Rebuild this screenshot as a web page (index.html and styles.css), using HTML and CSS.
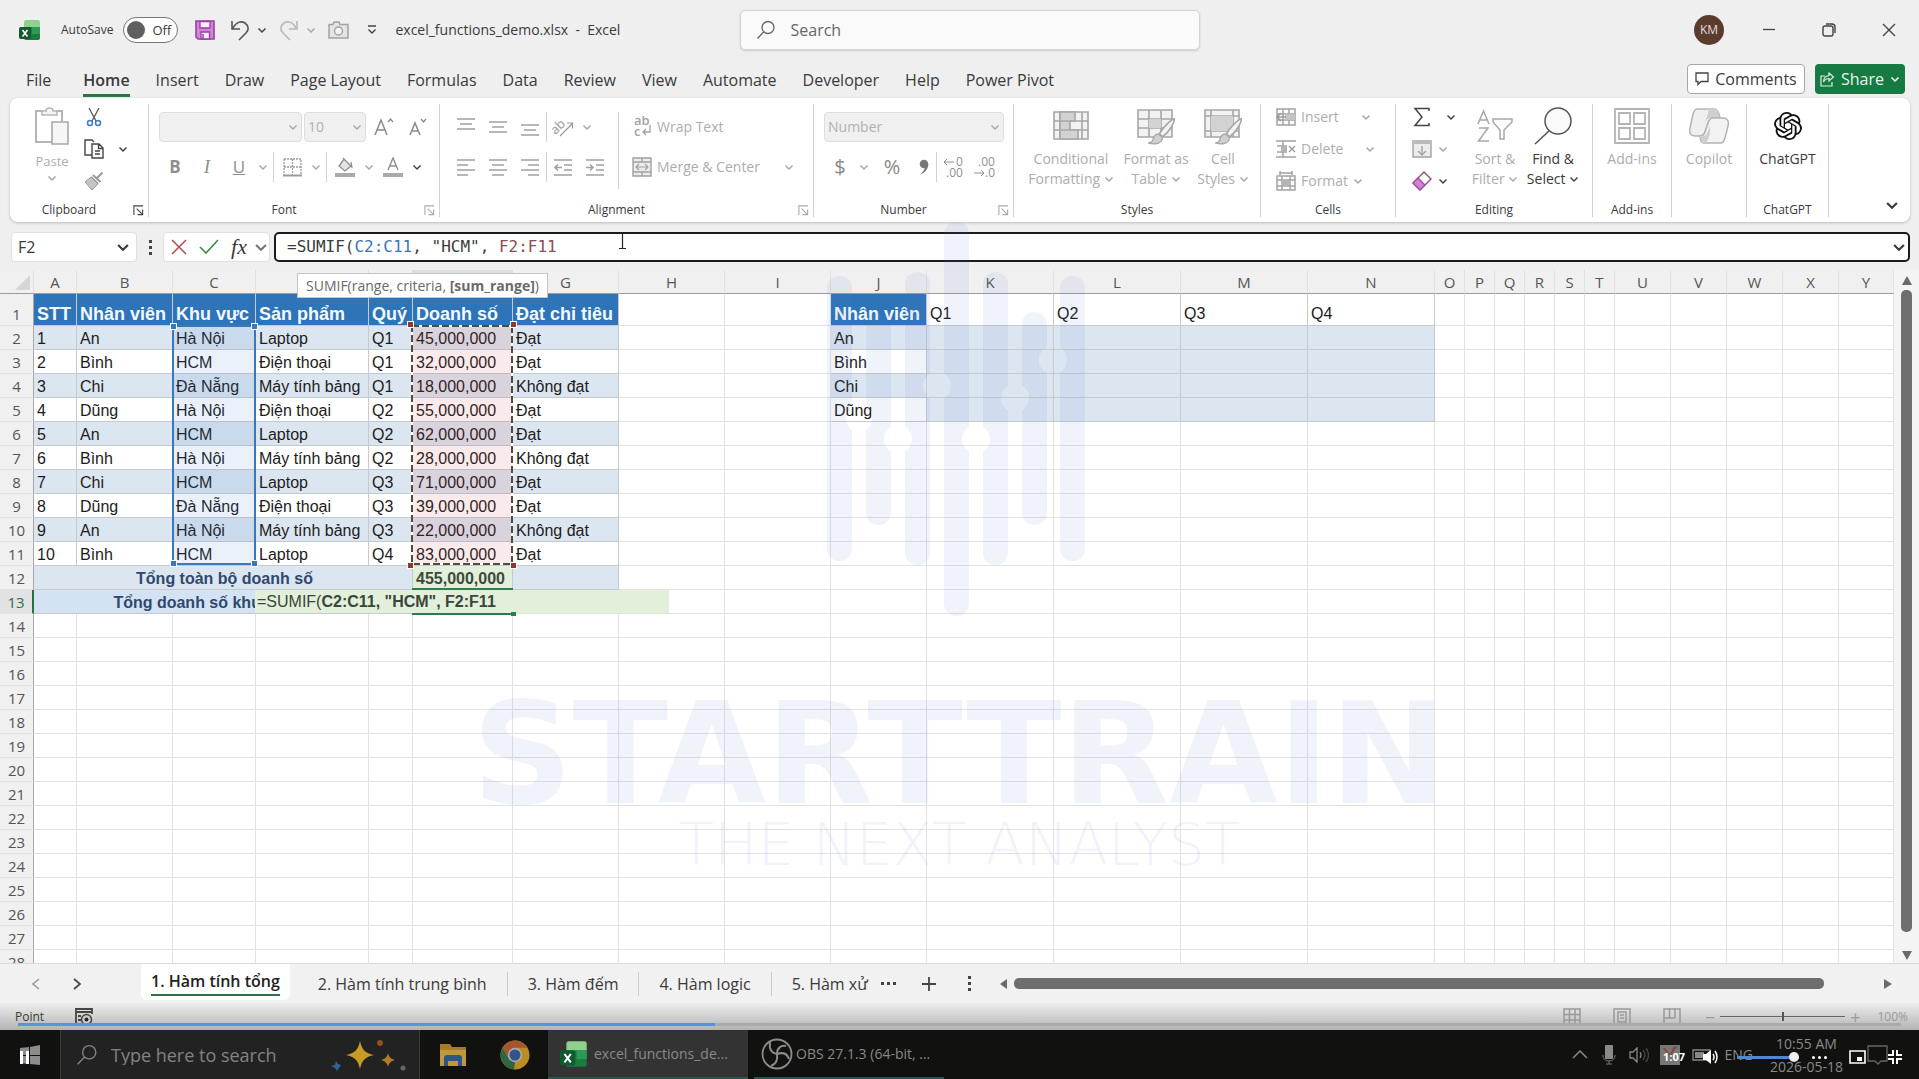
FILE: index.html
```html
<!DOCTYPE html>
<html lang="en">
<head>
<meta charset="utf-8">
<title>excel_functions_demo.xlsx - Excel</title>
<link rel="stylesheet" href="styles.css">
</head>
<body>
<svg class="defs" aria-hidden="true">
  <symbol id="chev" viewBox="0 0 10 10"><path d="M1.500 3.500 5 7l3.500-3.500" fill="none" stroke="currentColor" stroke-width="1.500"/></symbol>
  <symbol id="launch" viewBox="0 0 12 12"><path d="M1 11V1h10M4 4l6 6M10.500 5v5.500H5" fill="none" stroke="currentColor" stroke-width="1.200"/></symbol>
  <symbol id="lens" viewBox="0 0 20 20"><path d="M12 1.500a6 6 0 1 1 0 12 6 6 0 0 1 0-12zM7.800 11.800 1.500 18.500" fill="none" stroke="currentColor" stroke-width="1.300"/></symbol>
  <symbol id="xl" viewBox="0 0 22 22"><path d="M7 1h12a2 2 0 0 1 2 2v6H5V3a2 2 0 0 1 2-2z" fill="#8fd08f"/><path d="M5 8h16v11a2 2 0 0 1-2 2H7a2 2 0 0 1-2-2z" fill="#1d7a41"/><path d="M13 8h8v7h-8z" fill="#2c9a55"/><rect x="0" y="8" width="12" height="12" rx="2" fill="#12592f"/><path d="m3.500 11 5 6.500M8.500 11l-5 6.500" stroke="#fff" stroke-width="1.600"/></symbol>
  <symbol id="brush" viewBox="0 0 28 26"><path d="M26.500 1.500c-4 1-11 9-14 14l3 3c5-4 11-12 11-17z" fill="#f4f4f4" stroke="#a6a6a6" stroke-width="1.500"/><path d="M12 16c-3 0-5 2-5.500 5-.5 2-2 3-4.500 3 6 2 13 1 13.500-5z" fill="#d0d0d0" stroke="#a6a6a6" stroke-width="1.200"/></symbol>
</svg>

<header class="titlebar">
  <svg class="app-icon"><use href="#xl"/></svg>
  <label class="autosave">AutoSave <input type="checkbox" class="sr" disabled><span class="toggle"><i></i>Off</span></label>
  <button class="tb save" aria-label="Save"><svg width="20" height="20" viewBox="0 0 20 20"><path d="M1 1h18v18H3l-2-2z" fill="#cf86d6" stroke="#9b3fa6" stroke-width="1.600"/><path d="M5 1.500h10V8H5zM6 12h8.500v7H6z" fill="#f7eef8" stroke="#9b3fa6" stroke-width="1.300"/><path d="M8 14v5" stroke="#9b3fa6" stroke-width="1.500"/></svg></button>
  <button class="tb undo" aria-label="Undo"><svg width="20" height="22" viewBox="0 0 20 22"><path d="M2 2v8h8M2.500 9.500C6 3 11 1.500 15 4c4 3 4 7 1 10l-7 7" fill="none" stroke="#555" stroke-width="1.600"/></svg><svg class="chev"><use href="#chev"/></svg></button>
  <button class="tb redo" aria-label="Redo" disabled><svg width="20" height="22" viewBox="0 0 20 22"><path d="M18 2v8h-8M17.500 9.500C14 3 9 1.500 5 4c-4 3-4 7-1 10l7 7" fill="none" stroke="#b8b8b8" stroke-width="1.600"/></svg><svg class="chev"><use href="#chev"/></svg></button>
  <button class="tb camera" aria-label="Camera" disabled><svg width="21" height="18" viewBox="0 0 21 18"><path d="M1 3.500h4L6 1h5l1 2.500h8V17H1z" fill="#e4e4e4" stroke="#a3a3a3" stroke-width="1.500"/><circle cx="10.500" cy="10" r="4" fill="#f3f3f3" stroke="#a3a3a3" stroke-width="1.500"/></svg></button>
  <button class="tb more" aria-label="Customize Quick Access Toolbar"><svg width="10" height="10" viewBox="0 0 10 10"><path d="M1 1h8M1.500 4.500 5 8l3.500-3.500" fill="none" stroke="#444" stroke-width="1.400"/></svg></button>
  <h1>excel_functions_demo.xlsx&nbsp; -&nbsp; Excel</h1>
  <label class="search"><svg width="20" height="20"><use href="#lens"/></svg><input type="text" placeholder="Search" aria-label="Search"></label>
  <div class="window">
    <button class="avatar">KM</button>
    <button aria-label="Minimize"><svg width="14" height="14"><path d="M1 6.500h12" stroke="#444" stroke-width="1.300"/></svg></button>
    <button aria-label="Restore"><svg width="14" height="14"><path d="M1 5a2 2 0 0 1 2-2h6a2 2 0 0 1 2 2v6a2 2 0 0 1-2 2H3a2 2 0 0 1-2-2zM4 1h6a3 3 0 0 1 3 3v6" fill="none" stroke="#444" stroke-width="1.400"/></svg></button>
    <button aria-label="Close"><svg width="14" height="14"><path d="m1 1 12 12M13 1 1 13" stroke="#444" stroke-width="1.400"/></svg></button>
  </div>
</header>

<nav class="tabs">
  <a href="#">File</a><a href="#" class="on">Home</a><a href="#">Insert</a><a href="#">Draw</a><a href="#">Page Layout</a><a href="#">Formulas</a><a href="#">Data</a><a href="#">Review</a><a href="#">View</a><a href="#">Automate</a><a href="#">Developer</a><a href="#">Help</a><a href="#">Power Pivot</a>
  <button class="comments"><svg width="14" height="14"><path d="M1 1h12v8.500H6L3 12.500v-3H1z" fill="none" stroke="#444" stroke-width="1.300"/></svg>Comments</button>
  <button class="share"><svg width="15" height="15" viewBox="0 0 15 15"><path d="M5 4H1v10h11v-4M9 1l4.500 4L9 9V6.500C6 6.500 4.500 8 3.500 10 3.500 6.500 5.500 4 9 3.500z" fill="none" stroke="#d9efe0" stroke-width="1.200"/></svg>Share<svg class="chev"><use href="#chev"/></svg></button>
</nav>

<section class="ribbon" aria-label="Home ribbon">
  <div class="group g-clip">
    <div class="body">
      <button class="big" disabled><svg width="34" height="38" viewBox="0 0 34 38"><path d="M7 4H1v31h16M21 4h6v10" fill="none" stroke="#b5b5b5" stroke-width="2"/><path d="M7 8V4h4c0-4 7-4 7 0h4v4z" fill="#f4f4f4" stroke="#b5b5b5" stroke-width="1.500"/><path d="M17 15h16v22H17z" fill="#f6f6f6" stroke="#a8a8a8" stroke-width="1.600"/></svg><span>Paste</span><svg class="chev"><use href="#chev"/></svg></button>
      <div class="stack">
        <button aria-label="Cut"><svg width="20" height="20" viewBox="0 0 20 20"><path d="m5 1 7 13M15 1 8 14" stroke="#555" stroke-width="1.300"/><circle cx="6" cy="16" r="2.500" fill="none" stroke="#3b7cc0" stroke-width="1.500"/><circle cx="14" cy="16" r="2.500" fill="none" stroke="#3b7cc0" stroke-width="1.500"/></svg></button>
        <button aria-label="Copy"><svg width="20" height="20" viewBox="0 0 20 20"><path d="M8 16H1V1h7l2 2M8 5h7l4 4v10H8zM14.500 5v4.500H19M11 12h5M11 15h5" fill="none" stroke="#444" stroke-width="1.400"/></svg><svg class="chev"><use href="#chev"/></svg></button>
        <button aria-label="Format Painter" disabled><svg width="20" height="20" viewBox="0 0 20 20"><path d="M18.500 1.500 13 7M7 6l7 7M9 4l7.500 7" fill="none" stroke="#999" stroke-width="2"/><path d="M7 6 1 11l7 8 6-6z" fill="#c4c4c4" stroke="#999"/></svg></button>
      </div>
    </div>
    <div class="foot"><span>Clipboard</span><button aria-label="Clipboard settings"><svg><use href="#launch"/></svg></button></div>
  </div>

  <div class="group g-font">
    <div class="body rows">
      <div class="row">
        <select class="dd w-font" aria-label="Font" disabled><option></option></select>
        <select class="dd w-size" aria-label="Font size" disabled><option>10</option></select>
        <button class="s32" aria-label="Increase font size" disabled><svg width="20" height="20" viewBox="0 0 20 20"><path d="M1 18 7 3l6 15M3 13h8" fill="none" stroke="#8a8a8a" stroke-width="1.500"/><path d="m14 5 2.500-3L19 5" fill="none" stroke="#8a8a8a" stroke-width="1.300"/></svg></button>
        <button class="s32" aria-label="Decrease font size" disabled><svg width="18" height="20" viewBox="0 0 18 20"><path d="m1 18 5-12 5 12M3 14h6" fill="none" stroke="#8a8a8a" stroke-width="1.500"/><path d="m12 2 2.500 3L17 2" fill="none" stroke="#8a8a8a" stroke-width="1.300"/></svg></button>
      </div>
      <div class="row">
        <button class="s32 ltr" disabled><b>B</b></button><button class="s32 ltr ital" disabled>I</button><button class="s32 ltr und" disabled>U</button><button class="s16" aria-label="Underline options" disabled><svg class="chev"><use href="#chev"/></svg></button>
        <i class="sep"></i>
        <button class="s32" aria-label="Borders" disabled><svg width="19" height="19" viewBox="0 0 19 19"><path d="M1 1h17v16M1 1v16M9.500 1v16M1 9h17" fill="none" stroke="#9a9a9a" stroke-width="1.300" stroke-dasharray="2 1"/><path d="M0 17.500h19" stroke="#9a9a9a" stroke-width="2"/></svg></button><button class="s16" aria-label="Border options" disabled><svg class="chev"><use href="#chev"/></svg></button>
        <i class="sep"></i>
        <button class="s32" aria-label="Fill color" disabled><svg width="20" height="20" viewBox="0 0 20 20"><path d="m9 2 7 7-6 5-6-5zM8 1l3 3M16 5l1 6" fill="#e4e4e4" stroke="#8f8f8f" stroke-width="1.300"/><path d="M0 16h20v4H0z" fill="#aaa"/></svg></button><button class="s16" aria-label="Fill options" disabled><svg class="chev"><use href="#chev"/></svg></button>
        <button class="s32 fc" aria-label="Font color" disabled><svg width="20" height="20" viewBox="0 0 20 20"><path d="m5 13 5-12 5 12M7 9h6" fill="none" stroke="#8f8f8f" stroke-width="1.400"/><path d="M0 16h20v4H0z" fill="#aaa"/></svg></button><button class="s16" aria-label="Font color options"><svg class="chev"><use href="#chev"/></svg></button>
      </div>
    </div>
    <div class="foot"><span>Font</span><button aria-label="Font settings" disabled><svg><use href="#launch"/></svg></button></div>
  </div>

  <div class="group g-align">
    <div class="body">
      <div class="rows al">
        <div class="row">
          <button class="s32" aria-label="Top align" disabled><svg class="ln"><path d="M0 1h18M3 6h12M0 11h18"/></svg></button><button class="s32" aria-label="Middle align" disabled><svg class="ln"><path d="M0 4h18M3 9h12M0 14h18"/></svg></button><button class="s32" aria-label="Bottom align" disabled><svg class="ln"><path d="M0 7h18M3 12h12M0 17h18"/></svg></button><i class="sep"></i>
          <button class="s32" aria-label="Orientation" disabled><svg width="22" height="20" viewBox="0 0 22 20"><text x="0" y="14" transform="rotate(-45 7 12)" font-size="13" fill="#999">ab</text><path d="M8 19 20 7M15 6h5.500v5.500" fill="none" stroke="#999" stroke-width="1.200"/></svg></button><button class="s16" aria-label="Orientation options" disabled><svg class="chev"><use href="#chev"/></svg></button>
        </div>
        <div class="row">
          <button class="s32" aria-label="Align left" disabled><svg class="ln"><path d="M0 2h18M0 7h11M0 12h18M0 17h11"/></svg></button><button class="s32" aria-label="Center" disabled><svg class="ln"><path d="M0 2h18M3 7h12M0 12h18M3 17h12"/></svg></button><button class="s32" aria-label="Align right" disabled><svg class="ln"><path d="M0 2h18M7 7h11M0 12h18M7 17h11"/></svg></button><i class="sep"></i>
          <button class="s32" aria-label="Decrease indent" disabled><svg class="ln"><path d="M0 2h18M10 7h8M10 12h8M0 17h18M8 9.500H1M4 6.500l-3 3 3 3"/></svg></button><button class="s32" aria-label="Increase indent" disabled><svg class="ln"><path d="M0 2h18M10 7h8M10 12h8M0 17h18M0 9.500h7M4 6.500l3 3-3 3"/></svg></button>
        </div>
      </div>
      <div class="rows wrapcol">
        <button class="txt" disabled><svg width="20" height="22" viewBox="0 0 20 22"><text x="2" y="9" font-size="13" font-weight="600" fill="#a0a0a0">ab</text><text x="2" y="20" font-size="13" font-weight="600" fill="#a0a0a0">c</text><path d="M18 9v7h-7M14 13l-3 3 3 3" fill="none" stroke="#a0a0a0" stroke-width="1.300"/></svg>Wrap Text</button>
        <button class="txt" disabled><svg width="20" height="20" viewBox="0 0 20 20"><path d="M1 1h18v18H1zM1 5h18M1 15h18M10 1v4M10 15v4" fill="#ececec" stroke="#a0a0a0" stroke-width="1.400"/><path d="M4 10h12M7 7l-3 3 3 3M13 7l3 3-3 3" fill="none" stroke="#a0a0a0" stroke-width="1.200"/></svg>Merge &amp; Center<svg class="chev far"><use href="#chev"/></svg></button>
      </div>
    </div>
    <div class="foot"><span>Alignment</span><button aria-label="Alignment settings" disabled><svg><use href="#launch"/></svg></button></div>
  </div>

  <div class="group g-num">
    <div class="body rows">
      <div class="row"><select class="dd w-num" aria-label="Number format" disabled><option>Number</option></select></div>
      <div class="row">
        <button class="s32 sym" disabled>$</button><button class="s16" aria-label="Currency options" disabled><svg class="chev"><use href="#chev"/></svg></button><button class="s40 sym" disabled>%</button><button class="s24" aria-label="Comma style" disabled><svg width="10" height="16" viewBox="0 0 10 16"><circle cx="5" cy="5" r="4.300" fill="#777"/><path d="M9.300 5C9.300 10 6 14 1 15.500 4.500 12.500 6 10 6 7z" fill="#777"/></svg></button><i class="sep"></i>
        <button class="s32 dec" aria-label="Increase decimal" disabled><svg width="22" height="22" viewBox="0 0 22 22"><text x="14" y="10" font-size="12">0</text><text x="4" y="21" font-size="12">.00</text><path d="M12 6H2M5 3 2 6l3 3"/></svg></button><button class="s32 dec" aria-label="Decrease decimal" disabled><svg width="22" height="22" viewBox="0 0 22 22"><text x="4" y="10" font-size="12">.00</text><text x="11" y="21" font-size="12">.0</text><path d="M0 17h10M7 14l3 3-3 3"/></svg></button>
      </div>
    </div>
    <div class="foot"><span>Number</span><button aria-label="Number settings" disabled><svg><use href="#launch"/></svg></button></div>
  </div>

  <div class="group g-styles">
    <div class="body">
      <button class="big" disabled><svg width="36" height="30" viewBox="0 0 36 30"><path d="M1 1h34v27H1zM1 10h34M1 19h34M7 1v27M29 1v27" fill="#f2f2f2" stroke="#a6a6a6" stroke-width="1.600"/><path d="M7 1h15v9H7zM7 10h10v9H7zM7 19h18v9H7z" fill="#d2d2d2" stroke="#a6a6a6" stroke-width="1.600"/></svg><span>Conditional<br>Formatting <svg class="chev"><use href="#chev"/></svg></span></button>
      <button class="big" disabled><svg width="38" height="34" viewBox="0 0 38 34"><path d="M1 1h34v27H1zM1 10h34M1 19h34M12 1v27M24 1v27" fill="#f2f2f2" stroke="#a6a6a6" stroke-width="1.600"/><path d="M12 10h12v9H12z" fill="#d2d2d2"/><use href="#brush" x="9" y="8" width="30" height="28"/></svg><span>Format as<br>Table <svg class="chev"><use href="#chev"/></svg></span></button>
      <button class="big" disabled><svg width="38" height="34" viewBox="0 0 38 34"><path d="M1 1h34v27H1zM1 7h34M7 1v27M1 22h34M29 1v27" fill="#f2f2f2" stroke="#a6a6a6" stroke-width="1.600"/><path d="M7 7h22v15H7z" fill="#d2d2d2"/><use href="#brush" x="9" y="8" width="30" height="28"/></svg><span>Cell<br>Styles <svg class="chev"><use href="#chev"/></svg></span></button>
    </div>
    <div class="foot"><span>Styles</span></div>
  </div>

  <div class="group g-cells">
    <div class="body"><div class="stack">
      <button disabled><svg width="20" height="18" viewBox="0 0 20 18"><path d="M1 1h18v16H1zM7 1v16M13 1v16M1 6h18M1 12h18" fill="none" stroke="#a3a3a3" stroke-width="1.500"/><path d="M9 6h10v6H9z" fill="#c4c4c4"/><path d="M10 9H1M5 5 1 9l4 4" fill="none" stroke="#999" stroke-width="1.500"/></svg>Insert<svg class="chev c1"><use href="#chev"/></svg></button>
      <button disabled><svg width="20" height="18" viewBox="0 0 20 18"><path d="M0 1h20M0 17h20M7 1v16M1 6h10M1 12h10" fill="none" stroke="#a3a3a3" stroke-width="1.500"/><path d="M5 6h6v6H5z" fill="#b4b4b4"/><path d="m13 6 6 6M19 6l-6 6" stroke="#999" stroke-width="1.300"/></svg>Delete<svg class="chev c1"><use href="#chev"/></svg></button>
      <button disabled><svg width="20" height="20" viewBox="0 0 20 20"><path d="M1 5h18v14H1zM6 5v14M14 5v14M1 9h18M1 15h18M4 2h12M4 0v4M16 0v4" fill="none" stroke="#a3a3a3" stroke-width="1.500"/><path d="M6 9h8v6H6z" fill="#b4b4b4"/></svg>Format<svg class="chev"><use href="#chev"/></svg></button>
    </div></div>
    <div class="foot"><span>Cells</span></div>
  </div>

  <div class="group g-edit">
    <div class="body">
      <div class="stack">
        <button aria-label="AutoSum"><svg width="20" height="20" viewBox="0 0 20 20"><path d="M17 4V1.500H3l7 8.500-7 8.500h14V16" fill="none" stroke="#444" stroke-width="1.500"/></svg><svg class="chev c2"><use href="#chev"/></svg></button>
        <button aria-label="Fill" disabled><svg width="20" height="18" viewBox="0 0 20 18"><path d="M1 1h18v16H1z" fill="#ececec" stroke="#a3a3a3" stroke-width="1.400"/><path d="M1 1h18v3H1z" fill="#bbb"/><path d="M10 6v9M6 11l4 4 4-4" fill="none" stroke="#a3a3a3" stroke-width="1.400"/></svg><svg class="chev"><use href="#chev"/></svg></button>
        <button aria-label="Clear"><svg width="20" height="20" viewBox="0 0 20 20"><path d="m12 1 7 7L8 19l-7-7z" fill="#fff" stroke="#8b4a86" stroke-width="1.400"/><path d="m6 7 7 7-5 5-7-7z" fill="#d084d6" stroke="#a04aa0" stroke-width="1.200"/></svg><svg class="chev"><use href="#chev"/></svg></button>
      </div>
      <button class="big" disabled><svg width="36" height="34" viewBox="0 0 36 34"><path d="m1 15 5.500-13L12 15M3 11h7M2 19h9L1.500 32H12M16 10h19v3l-8 8v9h-4v-9l-7-8z" fill="none" stroke="#a8a8a8" stroke-width="1.500"/></svg><span>Sort &amp;<br>Filter <svg class="chev"><use href="#chev"/></svg></span></button>
      <button class="big"><svg width="38" height="38" viewBox="0 0 38 38"><circle cx="24" cy="14" r="13" fill="#fafafa" stroke="#555" stroke-width="1.500"/><path d="M15 24 1 37" stroke="#555" stroke-width="1.600"/></svg><span>Find &amp;<br>Select <svg class="chev"><use href="#chev"/></svg></span></button>
    </div>
    <div class="foot"><span>Editing</span></div>
  </div>

  <div class="group g-add">
    <div class="body"><button class="big" disabled><svg width="36" height="36" viewBox="0 0 36 36"><path d="M1 1h34v34H1zM5 5h11v11H5zM20 5h11v11H20zM5 20h11v11H5zM20 20h11v11H20z" fill="none" stroke="#b4b4b4" stroke-width="1.800"/></svg><span>Add-ins</span></button></div>
    <div class="foot"><span>Add-ins</span></div>
  </div>
  <div class="group g-cop">
    <div class="body"><button class="big" disabled><svg width="40" height="36" viewBox="0 0 40 36"><path d="M8 1h17c3 0 4 2 5 5l1 4h-7c-3 0-4 2-5 5l-3 9c-1 3-2 4-5 4H6c-5 0-6-4-5-8L4 6c1-3 2-5 4-5z" fill="#efefef" stroke="#b4b4b4" stroke-width="1.500"/><path d="M20 1c-2 8-4 13-4 13s2-4 6-4h9c-1-5-2-9-5-9z" fill="#cfcfcf"/><path d="M32 35H15c-3 0-4-2-4-7 3 0 4-1 5-4l3-9c1-3 2-5 5-5h10c5 0 6 4 5 8l-3 12c-1 3-2 5-4 5z" fill="#f3f3f3" stroke="#b4b4b4" stroke-width="1.500"/><path d="M11 28h3c3 0 4-2 5-5l2-5c1 8-2 17-6 17-2 0-3-2-4-7z" fill="#cfcfcf"/></svg><span>Copilot</span></button></div>
    <div class="foot"></div>
  </div>
  <div class="group g-gpt">
    <div class="body"><button class="big"><svg width="28" height="28" viewBox="0 0 24 24"><path d="M22.2819 9.8211a5.9847 5.9847 0 0 0-.5157-4.9108 6.0462 6.0462 0 0 0-6.5098-2.9A6.0651 6.0651 0 0 0 4.9807 4.1818a5.9847 5.9847 0 0 0-3.9977 2.9 6.0462 6.0462 0 0 0 .7427 7.0966 5.98 5.98 0 0 0 .511 4.9107 6.051 6.051 0 0 0 6.5146 2.9001A5.9847 5.9847 0 0 0 13.2599 24a6.0557 6.0557 0 0 0 5.7718-4.2058 5.9894 5.9894 0 0 0 3.9977-2.9001 6.0557 6.0557 0 0 0-.7475-7.0729zm-9.022 12.6081a4.4755 4.4755 0 0 1-2.8764-1.0408l.1419-.0804 4.7783-2.7582a.7948.7948 0 0 0 .3927-.6813v-6.7369l2.02 1.1686a.071.071 0 0 1 .038.052v5.5826a4.504 4.504 0 0 1-4.4945 4.4944zm-9.6607-4.1254a4.4708 4.4708 0 0 1-.5346-3.0137l.142.0852 4.783 2.7582a.7712.7712 0 0 0 .7806 0l5.8428-3.3685v2.3324a.0804.0804 0 0 1-.0332.0615L9.74 19.9502a4.4992 4.4992 0 0 1-6.1408-1.6464zM2.3408 7.8956a4.485 4.485 0 0 1 2.3655-1.9728V11.6a.7664.7664 0 0 0 .3879.6765l5.8144 3.3543-2.0201 1.1685a.0757.0757 0 0 1-.071 0l-4.8303-2.7865A4.504 4.504 0 0 1 2.3408 7.872zm16.5963 3.8558L13.1038 8.364 15.1192 7.2a.0757.0757 0 0 1 .071 0l4.8303 2.7913a4.4944 4.4944 0 0 1-.6765 8.1042v-5.6772a.79.79 0 0 0-.407-.667zm2.0107-3.0231l-.142-.0852-4.7735-2.7818a.7759.7759 0 0 0-.7854 0L9.409 9.2297V6.8974a.0662.0662 0 0 1 .0284-.0615l4.8303-2.7866a4.4992 4.4992 0 0 1 6.6802 4.66zM8.3065 12.863l-2.02-1.1638a.0804.0804 0 0 1-.038-.0567V6.0742a4.4992 4.4992 0 0 1 7.3757-3.4537l-.142.0805L8.704 5.459a.7948.7948 0 0 0-.3927.6813zm1.0976-2.3654l2.602-1.4998 2.6069 1.4998v2.9994l-2.5974 1.4997-2.6067-1.4997Z" fill="#111"/></svg><span>ChatGPT</span></button></div>
    <div class="foot"><span>ChatGPT</span></div>
  </div>
  <button class="collapse" aria-label="Collapse ribbon"><svg width="14" height="14"><use href="#chev"/></svg></button>
</section>

<section class="formula-row">
  <label class="namebox"><input type="text" value="F2" aria-label="Name box"><svg width="14" height="14"><use href="#chev"/></svg></label>
  <span class="vdots"><i></i><i></i><i></i></span>
  <div class="fxbox">
    <button aria-label="Cancel"><svg width="16" height="16"><path d="m1 1 14 14M15 1 1 15" stroke="#b8474f" stroke-width="1.500"/></svg></button>
    <button aria-label="Enter"><svg width="20" height="16"><path d="m1 8 6 6L19 1" fill="none" stroke="#3f8a50" stroke-width="1.600"/></svg></button>
    <button class="fx">fx</button>
    <button class="fxc" aria-label="Function options"><svg width="14" height="14"><use href="#chev"/></svg></button>
  </div>
  <div class="formula"><div class="ftext" role="textbox" contenteditable="true" aria-label="Formula bar" spellcheck="false">=SUMIF(<span class="ref-blue">C2:C11</span>, "HCM", <span class="ref-red">F2:F11</span></div><svg width="14" height="14"><use href="#chev"/></svg>
    <svg class="ibeam" width="9" height="17"><path d="M4.500 0v15M1 15.500h7" stroke="#222" stroke-width="1.200"/></svg></div>
  <div class="hint">SUMIF(range, criteria, <b>[sum_range]</b>)</div>
</section>

<main class="work">
  <div class="sheet">
    <table id="grid"></table>
    <div class="range blue"><i></i><i></i><i></i><i></i></div>
    <div class="range red"><svg width="100%" height="100%"><rect x="1" y="1" width="100" height="238" fill="none" stroke="#fff" stroke-width="2"/><rect x="1" y="1" width="100" height="238" fill="none" stroke="#4c4c40" stroke-width="2" stroke-dasharray="7 3"/></svg><i></i><i></i><i></i><i></i></div>
    <div class="greenline"></div>
    <div class="editor"><span>=SUMIF(</span>C2:C11, "HCM", F2:F11</div>
    <div class="activeline"><i></i></div>
  </div>
  <div class="vscroll"><i class="up"></i><i class="thumb"></i><i class="down"></i></div>
</main>

<footer class="sheetbar">
  <div class="nav"><button aria-label="Previous sheet" disabled><svg width="8" height="12"><path d="M7 1 1 6l6 5" fill="none" stroke="#999" stroke-width="1.500"/></svg></button><button aria-label="Next sheet"><svg width="8" height="12"><path d="m1 1 6 5-6 5" fill="none" stroke="#444" stroke-width="1.700"/></svg></button></div>
  <a href="#" class="st on"><span>1. Hàm tính tổng</span></a>
  <a href="#" class="st">2. Hàm tính trung bình</a><a href="#" class="st">3. Hàm đếm</a><a href="#" class="st">4. Hàm logic</a><a href="#" class="st last">5. Hàm xử</a>
  <button class="dots" aria-label="More sheets"><i></i><i></i><i></i></button>
  <button class="plus" aria-label="New sheet"><svg width="14" height="14"><path d="M7 0v14M0 7h14" stroke="#444" stroke-width="1.800"/></svg></button>
  <span class="vdots"><i></i><i></i><i></i></span>
  <div class="hscroll"><i class="left"></i><i class="thumb"></i><i class="right"></i></div>
</footer>
<div class="status">
  <span>Point</span>
  <svg class="macro" width="18" height="18" viewBox="0 0 18 18"><path d="M1 16V1h16v5M1 4h16M3 8h3M3 12h3" fill="none" stroke="#444" stroke-width="1.800"/><circle cx="11.500" cy="11.500" r="5" fill="#ccc" stroke="#444" stroke-width="1.500"/><circle cx="11.500" cy="11.500" r="2" fill="#222"/></svg>
  <div class="views">
    <button aria-label="Normal view"><svg><path d="M1 1h16v16H1zM1 6.500h16M1 12h16M6.500 1v16M12 1v16"/></svg></button>
    <button aria-label="Page layout view"><svg><path d="M1 1h16v16H1zM5 4h8v10H5zM7 7h4M7 10h4"/></svg></button>
    <button aria-label="Page break view"><svg><path d="M1 17V1h16v16M1 17h16M6.500 1v9M12 1v9H1"/></svg></button>
  </div>
  <div class="zoom"><span>−</span><i></i><span>+</span></div>
  <span class="pct">100%</span>
</div>
<div class="taskbar">
  <button class="start" aria-label="Start"><svg width="20" height="20"><path d="M0 3 9 2v8H0zM10 2l10-2v10H10zM0 11h9v8l-9-1zM10 11h10v9l-10-1z" fill="#8c8c8c"/></svg></button>
  <label class="tsearch"><svg width="22" height="22"><use href="#lens"/></svg><input type="text" placeholder="Type here to search" aria-label="Type here to search"><svg width="78" height="34" viewBox="0 0 78 34"><path d="M30 3c2 9 5 12 14 14-9 2-12 5-14 14-2-9-5-12-14-14 9-2 12-5 14-14z" fill="#c99a28"/><path d="M58 15c1 4 3 6 7 7-4 1-6 3-7 7-1-4-3-6-7-7 4-1 6-3 7-7z" fill="#b07a2a"/><path d="m6 23 2 3 3 1-2 3-2 3-2-3-4-2 4-1z" fill="#2d6396"/><circle cx="50" cy="5" r="3" fill="#8f5220"/><circle cx="73" cy="30" r="2.500" fill="#666"/></svg></label>
  <button class="pin" aria-label="File Explorer"><svg width="28" height="24" viewBox="0 0 28 24"><path d="M1 1h10l2 3h14v19H1z" fill="#a87c24"/><path d="M1 7h26v16H1z" fill="#bd993c"/><path d="M5 23v-8q0-3 3-3h12q3 0 3 3v8h-4v-5H9v5z" fill="#2f5583"/></svg></button>
  <button class="pin" aria-label="Chrome"><svg width="30" height="30" viewBox="0 0 30 30"><circle cx="15" cy="15" r="14.500" fill="#b98d24"/><path d="M2.500 7.700A14.500 14.500 0 0 1 27.600 7.700H15L8.700 18.600z" fill="#a5562f"/><path d="M2.500 7.700 8.700 18.600 15 22l-1 7.400A14.500 14.500 0 0 1 2.500 7.700z" fill="#2d6742"/><circle cx="15" cy="15" r="7.200" fill="#aaa"/><circle cx="15" cy="15" r="5.500" fill="#31548f"/></svg></button>
  <button class="app on"><svg width="28" height="28"><use href="#xl"/></svg>excel_functions_de...</button>
  <button class="app"><svg width="32" height="32" viewBox="0 0 32 32"><circle cx="16" cy="16" r="14.500" fill="none" stroke="#8c8c8c" stroke-width="1.800"/><path d="M9 4c-1 7 1 11 7 12 6-2 10-1 12 5M16 16c1 6-1 10-6 12M16 16c0-6 4-9 9-8" fill="none" stroke="#8c8c8c" stroke-width="2"/></svg>OBS 27.1.3 (64-bit, ...</button>
  <div class="tray">
    <svg width="16" height="9"><path d="m1 8 7-7 7 7" fill="none" stroke="#888" stroke-width="1.500"/></svg>
    <svg width="14" height="20"><rect x="3" y="0" width="8" height="14" rx="1" fill="#8a8a8a"/><path d="M1 10q0 6 6 6t6-6M7 16v3M4 19h6" fill="none" stroke="#777"/></svg>
    <svg width="20" height="16"><path d="M1 5h3l4-4v14l-4-4H1zM11 5q2 3 0 6" fill="none" stroke="#888" stroke-width="1.300"/><path d="M14 3q4 5 0 10M17 1q5 7 0 14" fill="none" stroke="#444" stroke-width="1.300"/></svg>
    <svg width="20" height="20"><path d="M0 0h20v20H0z" fill="#777"/><path d="m4 3 6 8 5-9M12 4l5-2" fill="none" stroke="#884a42" stroke-width="2"/></svg>
    <svg width="20" height="12"><path d="M1 1h17v10H1z" fill="none" stroke="#888" stroke-width="1.300"/><path d="M3 3h9v6H3z" fill="#888"/></svg>
    <span>ENG</span>
    <span class="clock">10:55 AM<br>2026-05-18</span>
    <svg width="22" height="20"><path d="M1 1h19v15h-6l-3 3-3-3H1z" fill="none" stroke="#666" stroke-width="1.300"/></svg>
  </div>
</div>

<svg class="wm-mark" width="260" height="396" viewBox="0 0 260 396" aria-hidden="true">
  <mask id="cut"><path d="M0 0h260v396H0z" fill="#fff"/><g fill="#000"><ellipse cx="32" cy="196" rx="13" ry="14"/><ellipse cx="71" cy="217" rx="14" ry="14"/><ellipse cx="110" cy="164" rx="14" ry="14"/><ellipse cx="149" cy="217" rx="14" ry="14"/><ellipse cx="188" cy="176" rx="14" ry="14"/><ellipse cx="226" cy="138" rx="14" ry="14"/></g></mask>
  <g mask="url(#cut)"><rect x="0" y="54" width="25" height="285" rx="12"/><rect x="39" y="90" width="25" height="213" rx="12"/><rect x="78" y="50" width="25" height="293" rx="12"/><rect x="117" y="0" width="25" height="394" rx="12"/><rect x="156" y="50" width="25" height="293" rx="12"/><rect x="195" y="90" width="25" height="213" rx="12"/><rect x="233" y="54" width="25" height="285" rx="12"/></g>
</svg>
<div class="wm-text" aria-hidden="true"><strong>STARTTRAIN</strong><span>THE NEXT ANALYST</span></div>

<div class="player">
  <div class="progress"><i></i></div>
  <svg class="pause" width="9" height="13"><path d="M0 0h3v13H0zM6 0h3v13H6z" fill="#fff"/></svg>
  <div class="controls">
    <b>1:07</b>
    <svg class="vol" width="16" height="14"><path d="M0 4h3l5-4v14l-5-4H0z" fill="#fff"/><path d="M10 4q2 3 0 6M12 1q4 6 0 12" fill="none" stroke="#fff" stroke-width="1.500"/></svg>
    <input type="range" class="volume" value="100" aria-label="Volume">
    <button class="dots" aria-label="More options"><i></i><i></i><i></i></button>
    <button aria-label="Picture in picture"><svg width="17" height="14"><path d="M1 1h15v12H1z" fill="none" stroke="#fff" stroke-width="1.600"/><path d="M8 7h5v4H8z" fill="#fff"/></svg></button>
    <button aria-label="Exit full screen"><svg width="14" height="14"><path d="M5 0v5H0M9 0v5h5M5 14V9H0M9 14V9h5" fill="none" stroke="#fff" stroke-width="2"/></svg></button>
  </div>
</div>
<script src="script.js"></script>
</body>
</html>
```
FILE: styles.css
```css
* { box-sizing: border-box; }
body {
  margin: 0;
  height: 100vh;
  display: flex;
  flex-direction: column;
  overflow: hidden;
  position: relative;
  background: #efefef;
  color: #3a3a3a;
  font: 14px/20px "Open Sans", "Noto Sans", sans-serif;
}
button, input, select { font: inherit; color: inherit; border: 0; background: none; padding: 0; margin: 0; }
button { display: flex; align-items: center; justify-content: center; flex: none; }
a { color: inherit; text-decoration: none; }
svg { flex: none; display: block; }
input { outline: 0; min-width: 0; }
.defs { position: absolute; width: 0; height: 0; }
.sr { position: absolute; opacity: 0; }
.chev { width: 10px; height: 10px; color: #444; }
:disabled .chev { color: #a8a8a8; }

/* title bar */
.titlebar { display: flex; align-items: center; height: 60px; padding-left: 19px; position: relative; flex: none; }
.app-icon { width: 22px; height: 22px; }
.autosave { display: flex; align-items: center; gap: 10px; margin-left: 20px; font-size: 12px; }
.toggle { display: flex; align-items: center; gap: 7px; width: 55px; height: 26px; border: 1px solid #777; border-radius: 13px; background: #fdfdfd; padding-left: 3px; font-size: 13px; }
.toggle i { width: 18px; height: 18px; border-radius: 50%; background: #5f5f5f; }
.tb { gap: 7px; }
.save { margin-left: 17px; }
.undo { margin-left: 15px; }
.redo { margin-left: 12px; }
.camera { margin-left: 12px; }
.more { margin-left: 18px; }
h1 { margin: 0 0 0 18px; font-size: 14px; font-weight: 400; }
.search { position: absolute; left: 50%; top: 10px; width: 460px; height: 40px; transform: translateX(-50%); margin-left: 10px; display: flex; align-items: center; gap: 15px; padding-left: 15px; background: #fafafa; border: 1px solid #d4d4d4; border-radius: 5px; box-shadow: 0 1px 2px #ccc; color: #666; }
.search input { flex: 1; font-size: 16px; }
input::placeholder { color: inherit; opacity: 1; }
.window { display: flex; margin-left: auto; }
.window button { width: 60px; height: 30px; }
.window .avatar { width: 30px; border-radius: 50%; background: #5a3c2e; color: #e6dcd4; font-size: 12px; margin-right: 15px; }

/* ribbon tabs */
.tabs { display: flex; align-items: center; gap: 26px; height: 38px; padding: 0 14px 0 26px; font-size: 16px; flex: none; }
.tabs a { height: 36px; line-height: 38px; white-space: nowrap; }
.tabs a:first-child { margin-right: 6px; }
.tabs .on { font-weight: 600; border-bottom: 3px solid #2a7444; }
.tabs button { height: 30px; border-radius: 4px; gap: 6px; }
.tabs .comments { margin-left: auto; width: 118px; background: #fff; border: 1px solid #a8a8a8; margin-right: -16px; }
.tabs .share { width: 90px; background: #187a43; color: #e8f5ec; }
.tabs .share .chev { color: #fff; }

/* ribbon */
.ribbon { display: flex; margin: 0 9px 0 10px; height: 124px; background: #fff; border-radius: 8px; box-shadow: 0 1px 3px #bbb; flex: none; position: relative; }
.group { display: flex; flex-direction: column; margin: 6px 0 5px; border-right: 1px solid #d2d2d2; flex: none; }
.body { flex: 1; display: flex; align-items: flex-start; }
.foot { display: flex; height: 14px; line-height: 14px; font-size: 12px; }
.foot span { flex: 1; text-align: center; }
.foot button { width: 20px; color: #444; }
.foot button:disabled { color: #aaa; }
.foot button svg { width: 11px; height: 11px; }
.g-clip { width: 139px; } .g-font { width: 291px; } .g-align { width: 374px; } .g-num { width: 200px; }
.g-styles { width: 247px; } .g-cells { width: 135px; } .g-edit { width: 197px; } .g-add { width: 79px; } .g-cop { width: 75px; } .g-gpt { width: 82px; }
.big { flex-direction: column; justify-content: flex-start; padding-top: 3px; line-height: 20px; text-align: center; }
.big > svg:first-child { height: 38px; margin-bottom: 4px; }
.big:disabled, .txt:disabled, .stack button:disabled { color: #adadad; }
.big span .chev { display: inline-block; }
.g-clip .big { margin-left: 21px; width: 42px; margin-right: 11px; }
.g-clip .big span { line-height: 24px; font-size: 13px; }
.g-gpt .big > svg:first-child { width: 28px; }
.g-add .big, .g-cop .big, .g-gpt .big { width: 100%; }
.stack { display: flex; flex-direction: column; gap: 6px; }
.stack button { height: 26px; justify-content: flex-start; }
.g-clip .stack .chev { margin-left: 14px; }
.g-styles .body { padding-left: 11px; gap: 4px; }
.g-styles .big:nth-child(1) { width: 92px; } .g-styles .big:nth-child(2) { width: 70px; } .g-styles .big:nth-child(3) { width: 56px; }
.g-cells .body { padding-left: 15px; }
.g-cells .stack svg:first-child { margin-right: 5px; }
.g-cells .chev { margin-left: 5px; }
.g-cells .c1 { margin-left: 22px; }
.g-edit .body { padding-left: 16px; }
.g-edit .stack { width: 54px; }
.g-edit .stack .chev { margin-left: 6px; }
.g-edit .stack .c2 { margin-left: 14px; }
.g-edit .big { width: 58px; white-space: nowrap; }
.collapse { margin-left: auto; align-self: flex-end; margin: 0 11px 10px auto; }

.rows { display: flex; flex-direction: column; gap: 10px; padding-top: 8px; align-items: flex-start; }
.row { display: flex; align-items: center; height: 30px; }
.s16 { width: 16px; } .s24 { width: 24px; } .s32 { width: 32px; } .s40 { width: 40px; }
.sep { width: 1px; height: 30px; background: #d2d2d2; }
.dd { appearance: none; height: 30px; border: 1px solid #dedede; border-radius: 4px; color: #b0b0b0; opacity: 1; padding-left: 3px; background: #f0f0f0 url("data:image/svg+xml,%3Csvg xmlns='http://www.w3.org/2000/svg' width='10' height='10'%3E%3Cpath d='M1.500 3.500 5 7l3.500-3.500' fill='none' stroke='%23aaa' stroke-width='1.500'/%3E%3C/svg%3E") no-repeat right 3px center; }
.w-font { width: 143px; } .w-size { width: 62px; } .w-num { width: 180px; }
.g-font .rows { padding-left: 10px; }
.g-font .row:nth-child(2) .sep { margin: 0 2px; }
.g-font .row:first-child { gap: 2px; }
.g-font.group .rows { padding-left: 10px; }
.ltr { color: #8f8f8f; font-size: 17px; }
.ital { font-family: "Liberation Serif", serif; font-style: italic; font-size: 19px; }
.und { text-decoration: underline; }
.al { padding-left: 10px; margin-right: 7px; }
.ln { width: 18px; height: 19px; fill: none; stroke: #a0a0a0; stroke-width: 1.6px; }
.wrapcol { border-left: 1px solid #d2d2d2; margin-top: 8px; padding: 0 0 7px 13px; }
.txt { height: 30px; gap: 5px; }
.txt .far { margin-left: 19px; }
.g-num .rows { padding-left: 10px; }
.sym { color: #888; font-size: 20px; }
.dec svg { fill: #8f8f8f; }
.dec path { fill: none; stroke: #8f8f8f; }

/* formula bar */
.formula-row { display: flex; align-items: center; height: 48px; padding: 2px 9px 0 11px; flex: none; position: relative; }
.namebox, .fxbox { display: flex; align-items: center; height: 30px; background: #fff; border: 1px solid #e0e0e0; border-radius: 4px; }
.namebox { width: 126px; padding: 0 6px; }
.namebox input { flex: 1; width: 0; font-size: 16px; }
.vdots, .dots { display: flex; gap: 3px; }
.vdots { flex-direction: column; width: 26px; align-items: center; }
.vdots i, .dots i { width: 3px; height: 3px; background: #444; }
.fxbox { width: 107px; }
.fxbox button { width: 30px; }
.fxbox .fx { font: italic 22px/28px "Liberation Serif", serif; }
.fxbox .fxc { width: 14px; color: #777; }
.formula { flex: 1; display: flex; align-items: center; height: 30px; margin-left: 4px; padding: 0 2px 0 11px; background: #fff; border: 2px solid #1c1c1c; border-radius: 5px; position: relative; }
.ftext { flex: 1; outline: 0; font: 16px/26px "DejaVu Sans Mono", monospace; white-space: pre; }
.ref-blue { color: #3a76b5; } .ref-red { color: #8c4a55; }
.ibeam { position: absolute; left: 342px; top: -1px; }
.hint { position: absolute; left: 297px; top: 51px; z-index: 5; height: 25px; line-height: 23px; padding: 0 8px; background: #fff; border: 1px solid #c4c4c4; color: #6a6a6a; white-space: nowrap; }

/* sheet */
.work { flex: 1; display: flex; min-height: 0; }
.sheet { flex: 1; min-width: 0; position: relative; overflow: hidden; background: #fff; }
#grid { table-layout: fixed; width: 100%; border-spacing: 0; font: 16px/21px "Liberation Sans", Arial, sans-serif; color: #1c1c1c; }
#grid th, #grid td { padding: 2px 0 0 3px; height: 24px; border: solid #e2e2e2; border-width: 0 1px 1px 0; white-space: nowrap; overflow: hidden; text-align: left; font-weight: 400; }
#grid th { background: #f0f0f0; color: #555; font: 15px/21px "Open Sans", sans-serif; text-align: center; padding: 2px 0 0; }
#grid thead th { border-bottom-color: #9c9c9c; }
#grid tbody th { border-right-color: #a8a8a8; }
#grid tr.r1 td, #grid tr.r1 th { height: 32px; vertical-align: bottom; line-height: 22px; }
#grid .hot { background: #dedede; }
#grid th.rowhot { color: #287048; background: #e2e2e2; border-right: 2px solid #287048; }
#grid .head { background: #2e74b8; color: #f4f8fc; font-weight: 700; font-size: 18px; border-right-color: #a9c3df; }
#grid .in { border-color: #c6c9cd; }
#grid .alt { background: #dce6f1; }
#grid .tot { background: #dce6f1; text-align: center; font-weight: 700; color: #30486e; }
#grid .sum { background: #e2efda; font-weight: 700; color: #3b4a3b; }
#grid .cur { background: #d3e3f3; }
.corner { display: block; width: 0; height: 0; margin-left: 15px; border: solid transparent; border-width: 0 0 15px 15px; border-bottom-color: #d6d6d6; }
.range { position: absolute; top: 55px; height: 240px; }
.blue { left: 172px; width: 84px; border: 2px solid #3b78b8; background: rgba(60, 130, 210, .11); }
.red { left: 411px; width: 102px; background: rgba(200, 60, 70, .11); }
.range i { position: absolute; width: 7px; height: 7px; border: 1px solid #fff; background: #3b78b8; }
.range i:nth-last-child(4) { left: -4px; top: -4px; } .range i:nth-last-child(3) { right: -4px; top: -4px; }
.range i:nth-last-child(2) { left: -4px; bottom: -4px; } .range i:nth-last-child(1) { right: -4px; bottom: -4px; }
.red i { background: #8f3a2c; }
.greenline, .activeline { position: absolute; left: 412px; width: 101px; height: 2px; background: #2f7d4a; }
.greenline { top: 318px; } .activeline { top: 343px; }
.activeline i { position: absolute; right: -3px; top: -1px; width: 5px; height: 4px; background: #2f7d4a; }
.editor { position: absolute; left: 255px; top: 320px; width: 414px; height: 23px; padding-left: 2px; background: #e2efda; color: #3a463a; font: 700 16px/24px "Liberation Sans", Arial, sans-serif; }
.editor span { font-weight: 400; }
.vscroll { width: 25px; background: #f4f4f4; display: flex; flex-direction: column; align-items: center; padding: 6px 0 3px; gap: 5px; }
.vscroll .thumb { flex: 1; width: 11px; border-radius: 5px; background: #6e6e6e; margin-bottom: 14px; }
.up, .down, .left, .right { border: 5px solid transparent; width: 0; height: 0; }
.up { border-top: 0; border-bottom: 9px solid #6a6a6a; } .down { border-bottom: 0; border-top: 9px solid #6a6a6a; }
.left { border-left: 0; border-right: 7px solid #6a6a6a; } .right { border-right: 0; border-left: 8px solid #6a6a6a; }

/* sheet tabs */
.sheetbar { display: flex; align-items: center; height: 40px; border-top: 1px solid #d8d8d8; background: #f1f1f1; font-size: 16px; flex: none; }
.nav { display: flex; width: 141px; padding-left: 32px; gap: 33px; }
.st { display: flex; align-items: center; height: 24px; padding: 0 20px; border-right: 1px solid #ccc; white-space: nowrap; }
.st.on { height: 36px; align-self: flex-start; margin-right: 8px; padding: 0 10px; background: #fff; font-weight: 600; border: 0; border-radius: 0 0 6px 6px; color: #222; }
.st.on span { border-bottom: 2px solid #2a7444; line-height: 26px; }
.st.last { border: 0; padding-right: 13px; }
.plus { margin-left: 26px; }
.sheetbar .vdots { margin-left: 21px; }
.hscroll { flex: 1; display: flex; align-items: center; margin-left: 17px; padding-right: 27px; }
.hscroll .thumb { flex: 1; height: 11px; border-radius: 5px; background: #6e6e6e; margin: 0 60px 0 7px; }

/* status bar */
.status { display: flex; align-items: center; height: 27px; padding: 0 11px 0 15px; background: linear-gradient(#ededed, #b4b4b4); font-size: 12px; flex: none; }
.macro { margin-left: 31px; }
.views { display: flex; gap: 32px; margin-left: auto; }
.views svg { width: 18px; height: 18px; fill: none; stroke: #999; stroke-width: 1.5px; }
.zoom { display: flex; align-items: center; gap: 5px; margin-left: 24px; color: #999; font-size: 18px; }
.zoom i { width: 125px; height: 9px; background: linear-gradient(#555, #555) center / 2px 9px no-repeat, linear-gradient(#666, #666) center / 100% 1px no-repeat; }
.pct { margin-left: 17px; color: #999; }

/* taskbar */
.taskbar { display: flex; align-items: center; height: 49px; background: #11110f; color: #8a8a8a; flex: none; }
.start { width: 60px; }
.tsearch { display: flex; align-items: center; width: 360px; height: 49px; padding: 0 11px 0 15px; background: #222; border: 1px solid #3a3a3a; border-width: 0 1px; gap: 13px; color: #828282; }
.tsearch input { flex: 1; width: 0; font-size: 18px; }
.pin { width: 62px; height: 49px; margin-left: 2px; }
.pin + .pin { margin-left: 0; margin-right: 2px; }
.app { height: 49px; width: 200px; justify-content: flex-start; padding-left: 12px; gap: 6px; border-bottom: 2px solid #2c524e; white-space: nowrap; }
.app.on { background: #333; }
.app:not(.on) { margin-left: 6px; width: 190px; padding-left: 7px; gap: 3px; }
.tray { display: flex; align-items: center; margin-left: auto; padding-right: 30px; }
.tray > * { margin-right: 12px; }
.tray > :nth-child(1) { margin-right: 14px; } .tray > :nth-child(2) { margin-right: 13px; } .tray > :nth-child(3) { margin-right: 11px; }
.tray > :nth-child(7) { margin: 0 24px 0 5px; } .tray > :nth-child(8) { margin: 0; }
.clock { text-align: center; line-height: 23px; }

/* translucent brand mark over the page */
.wm-mark { position: absolute; left: 50%; top: 222px; margin-left: -133px; fill: #4a78c8; opacity: .08; pointer-events: none; }
.wm-text { position: absolute; left: 0; right: 0; top: 677px; display: flex; flex-direction: column; align-items: center; color: #4a60c8; opacity: .07; pointer-events: none; font-family: "DejaVu Sans", sans-serif; white-space: nowrap; }
.wm-text strong { font-size: 140px; line-height: 156px; }
.wm-text span { font-size: 58px; line-height: 24px; font-weight: 200; }

/* video player controls drawn over the desktop */
.player { position: absolute; left: 0; right: 0; bottom: 0; height: 56px; color: #fff; }
.progress { margin: 0 18px; height: 3px; background: #aaa; }
.progress i { display: block; width: 37%; height: 3px; background: #5a93dc; }
.pause { position: absolute; left: 20px; top: 28px; }
.controls { position: absolute; right: 17px; top: 27px; height: 14px; display: flex; align-items: center; }
.controls b { font: 700 11px/14px "Open Sans", sans-serif; margin-right: 18px; }
.volume { appearance: none; width: 62px; height: 3px; margin: 0 13px 0 18px; background: #4d8ad0; }
.volume::-webkit-slider-thumb { appearance: none; width: 10px; height: 10px; border-radius: 50%; background: #eee; }
.controls .dots i { background: #fff; border-radius: 50%; }
.controls button { margin-right: 22px; }
.controls button:last-child { margin: 0; }
```
FILE: script.js
```js
// The last column takes whatever width is left in the window.
const widths = [34, 43, 96, 83, 113, 44, 100, 106, 106, 106, 96, 127, 127, 127, 127, 30, 30, 30, 30, 30, 30, 56, 56, 56, 56];
const letters = 'ABCDEFGHIJKLMNOPQRSTUVWXY'.split('');
const rows = [
  ['STT', 'Nhân viên', 'Khu vực', 'Sản phẩm', 'Quý', 'Doanh số', 'Đạt chỉ tiêu'],
  [1, 'An', 'Hà Nội', 'Laptop', 'Q1', '45,000,000', 'Đạt'],
  [2, 'Bình', 'HCM', 'Điện thoại', 'Q1', '32,000,000', 'Đạt'],
  [3, 'Chi', 'Đà Nẵng', 'Máy tính bảng', 'Q1', '18,000,000', 'Không đạt'],
  [4, 'Dũng', 'Hà Nội', 'Điện thoại', 'Q2', '55,000,000', 'Đạt'],
  [5, 'An', 'HCM', 'Laptop', 'Q2', '62,000,000', 'Đạt'],
  [6, 'Bình', 'Hà Nội', 'Máy tính bảng', 'Q2', '28,000,000', 'Không đạt'],
  [7, 'Chi', 'HCM', 'Laptop', 'Q3', '71,000,000', 'Đạt'],
  [8, 'Dũng', 'Đà Nẵng', 'Điện thoại', 'Q3', '39,000,000', 'Đạt'],
  [9, 'An', 'Hà Nội', 'Máy tính bảng', 'Q3', '22,000,000', 'Không đạt'],
  [10, 'Bình', 'HCM', 'Laptop', 'Q4', '83,000,000', 'Đạt']
];
const staff = ['Nhân viên', 'An', 'Bình', 'Chi', 'Dũng'];

const cell = (text, cls) => `<td class="${cls || ''}">${text === undefined ? '' : text}</td>`;

function rowCells(r) {
  let html = '';
  let c = 0;
  if (r === 12) {
    html += '<td class="in tot" colspan="5">Tổng toàn bộ doanh số</td>' + cell('455,000,000', 'in sum') + cell('', 'in alt');
    c = 7;
  } else if (r === 13) {
    html += '<td class="in tot cur" colspan="5">Tổng doanh số khu vực HCM</td>' + cell('', 'sum');
    c = 6;
  }
  for (; c < letters.length; c++) {
    if (r <= 11 && c < 7) {
      html += cell(rows[r - 1][c], 'in ' + (r === 1 ? 'head' : r % 2 ? '' : 'alt'));
    } else if (r <= 5 && c === 9) {
      html += cell(staff[r - 1], 'in ' + (r === 1 ? 'head' : r % 2 ? '' : 'alt'));
    } else if (r === 1 && c > 9 && c < 14) {
      html += cell('Q' + (c - 9), 'in');
    } else if (r <= 5 && c > 9 && c < 14) {
      html += cell('', 'in alt');
    } else {
      html += cell();
    }
  }
  return html;
}

let html = '<colgroup>' + widths.map(w => `<col style="width:${w}px">`).join('') + '<col></colgroup>';
html += '<thead><tr><th><span class="corner"></span></th>' + letters.map(l => `<th class="${l === 'F' ? 'hot' : ''}">${l}</th>`).join('') + '</tr></thead><tbody>';
for (let r = 1; r <= 40; r++) {
  html += `<tr class="r${r}"><th class="${r === 13 ? 'rowhot' : ''}">${r}</th>${rowCells(r)}</tr>`;
}
document.getElementById('grid').innerHTML = html + '</tbody>';
```
